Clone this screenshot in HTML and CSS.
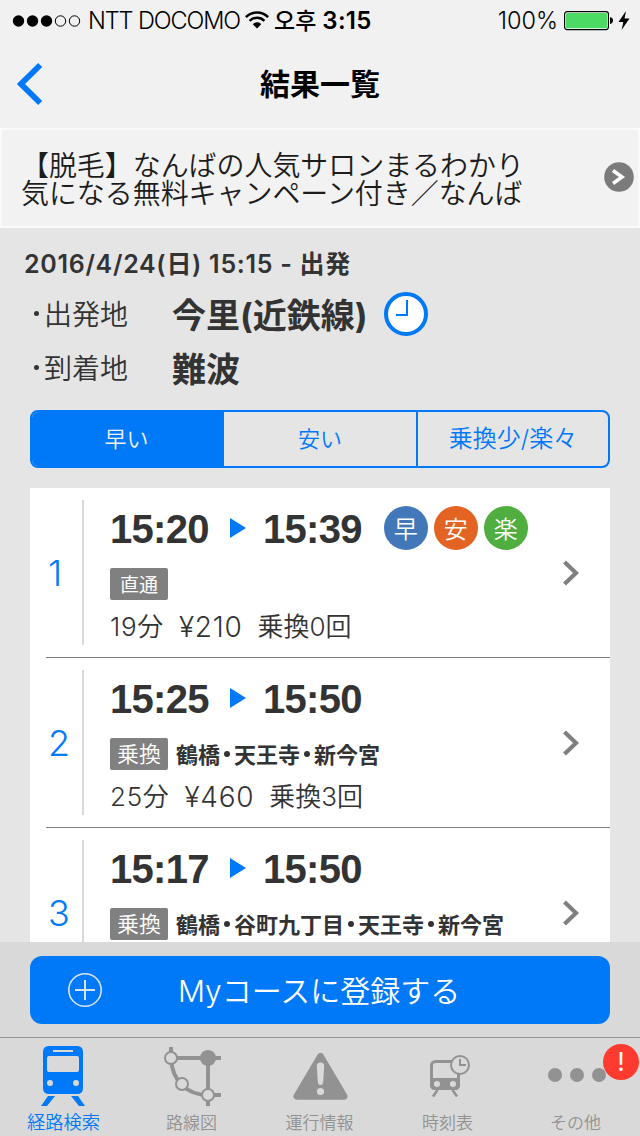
FILE: index.html
```html
<!DOCTYPE html>
<html lang="ja">
<head>
<meta charset="utf-8">
<title>結果一覧</title>
<link rel="stylesheet" href="styles.css">
</head>
<body>
<div class="screen">
  <header class="status">
    <svg class="signal" width="68" height="12" viewBox="0 0 68 12"><g fill="#000"><circle cx="6.500" cy="6" r="5.700"/><circle cx="20.500" cy="6" r="5.700"/><circle cx="34.500" cy="6" r="5.700"/></g><g fill="none" stroke="#000"><circle cx="48.500" cy="6" r="5.200"/><circle cx="62.500" cy="6" r="5.200"/></g></svg>
    <span class="carrier">NTT DOCOMO</span>
    <svg class="wifi" width="24" height="18" viewBox="0 0 24 18"><g fill="none" stroke="#000" stroke-width="2.500"><path d="M.9 6.200C7-.1 17-.1 23.100 6.200"/><path d="M4.600 9.900C8.700 5.800 15.300 5.800 19.400 9.900"/></g><path d="M7.800 13.200C10 10.700 14 10.700 16.200 13.200L12 17.500Z"/></svg>
    <span class="ampm" lang="ko">오후</span>
    <span class="clock">3:15</span>
    <span class="percent">100%</span>
    <svg class="battery" width="50" height="20" viewBox="0 0 50 20"><rect x=".6" y=".6" width="43.800" height="18" rx="2.500" fill="#fff" stroke="#000" stroke-width="1.200"/><rect x="2" y="2" width="41" height="15.200" rx="1" fill="#4cd964"/><path d="M46 6.300Q49 6.700 49 9.600Q49 12.500 46 12.900Z"/></svg>
    <svg class="bolt" width="12" height="20" viewBox="0 0 12 20"><path d="M8 0L.5 11H5.300L3.600 19L11.500 7.500H6.500Z"/></svg>
  </header>
  <nav class="nav">
    <svg class="back" width="26" height="42" viewBox="0 0 26 42"><path d="M23.200 2L4 21L23.200 40" fill="none" stroke="#0079f9" stroke-width="5.800"/></svg>
    <h1 class="title">結果一覧</h1>
  </nav>
  <section class="ad">
    <p class="ad-text">【脱毛】なんばの人気サロンまるわかり<br>気になる無料キャンペーン付き／なんば</p>
    <svg class="ad-go" width="30" height="30" viewBox="0 0 30 30"><circle cx="15" cy="15" r="14.800" fill="#7b7b7b"/><path d="M9 8.500L18 15L9 21.500" fill="none" stroke="#fff" stroke-width="3.600"/></svg>
  </section>
  <main class="main">
    <p class="date">2016/4/24(日) 15:15 - 出発</p>
    <div class="place"><span class="place-label"><i class="dot"></i>出発地</span><strong class="place-name">今里(近鉄線)</strong>
      <svg class="dial" width="44" height="44" viewBox="0 0 44 44"><circle cx="22" cy="22" r="20" fill="#fff" stroke="#0079f9" stroke-width="4"/><path d="M23 8V23H12" fill="none" stroke="#0079f9" stroke-width="2"/></svg>
    </div>
    <div class="place"><span class="place-label"><i class="dot"></i>到着地</span><strong class="place-name">難波</strong></div>
    <div class="segments"><span class="segment selected">早い</span><span class="segment">安い</span><span class="segment last">乗換少/楽々</span></div>
    <div class="results">
      <article class="result">
        <span class="rank">1</span>
        <div class="route">
          <div class="times"><span>15:20</span><svg class="arrow" width="16" height="20" viewBox="0 0 16 20"><path d="M0 0L16 10L0 20Z" fill="#0079f9"/></svg><span>15:39</span><span class="medals"><b class="medal fast">早</b><b class="medal cheap">安</b><b class="medal easy">楽</b></span></div>
          <div class="via"><span class="tag small">直通</span></div>
          <div class="detail"><span class="duration">19分</span><span class="fare">¥210</span><span>乗換0回</span></div>
        </div>
        <svg class="chevron" width="18" height="26" viewBox="0 0 18 26"><path d="M2.500 2L14 13L2.500 24" fill="none" stroke="#808080" stroke-width="4.200"/></svg>
      </article>
      <article class="result">
        <span class="rank">2</span>
        <div class="route">
          <div class="times"><span>15:25</span><svg class="arrow" width="16" height="20" viewBox="0 0 16 20"><path d="M0 0L16 10L0 20Z" fill="#0079f9"/></svg><span>15:50</span></div>
          <div class="via"><span class="tag">乗換</span><span class="stations">鶴橋<i class="sep"></i>天王寺<i class="sep"></i>新今宮</span></div>
          <div class="detail"><span class="duration">25分</span><span class="fare">¥460</span><span>乗換3回</span></div>
        </div>
        <svg class="chevron" width="18" height="26" viewBox="0 0 18 26"><path d="M2.500 2L14 13L2.500 24" fill="none" stroke="#808080" stroke-width="4.200"/></svg>
      </article>
      <article class="result">
        <span class="rank">3</span>
        <div class="route">
          <div class="times"><span>15:17</span><svg class="arrow" width="16" height="20" viewBox="0 0 16 20"><path d="M0 0L16 10L0 20Z" fill="#0079f9"/></svg><span>15:50</span></div>
          <div class="via"><span class="tag">乗換</span><span class="stations">鶴橋<i class="sep"></i>谷町九丁目<i class="sep"></i>天王寺<i class="sep"></i>新今宮</span></div>
        </div>
        <svg class="chevron" width="18" height="26" viewBox="0 0 18 26"><path d="M2.500 2L14 13L2.500 24" fill="none" stroke="#808080" stroke-width="4.200"/></svg>
      </article>
    </div>
  </main>
  <div class="register">
    <div class="register-button">
      <svg class="plus" width="34" height="34" viewBox="0 0 34 34" fill="none" stroke="#d9e3ee"><circle cx="17" cy="17" r="16.200" stroke-width="1.600"/><path d="M17 7V27M7 17H27" stroke-width="2"/></svg>
      <span class="register-text">Myコースに登録する</span>
    </div>
  </div>
  <footer class="tabs">
    <div class="tab active">
      <svg class="tab-icon" width="128" height="66" viewBox="0 0 128 66"><path fill="#0079f9" fill-rule="evenodd" d="M49 8H77Q83 8 83 14V50Q83 56 77 56H49Q43 56 43 50V14Q43 8 49 8ZM53 12V14H73V12ZM49 18Q47 18 47 20V32Q47 34 49 34H77Q79 34 79 32V20Q79 18 77 18ZM50 42A3 3 0 1 0 50 48A3 3 0 1 0 50 42ZM76 42A3 3 0 1 0 76 48A3 3 0 1 0 76 42ZM48 58H55L47 68H41ZM71 58H78L85 68H79Z"/></svg>
      <span class="tab-label">経路検索</span>
    </div>
    <div class="tab">
      <svg class="tab-icon" width="128" height="66" viewBox="0 0 128 66"><g fill="none" stroke="#929292" stroke-width="4"><path d="M43 9V20H93M80 20V68M80 57H93"/><path d="M43 20C44 43 59 57 80 57"/></g><circle cx="80" cy="20" r="8" fill="#929292"/><g fill="#d9d9d9" stroke="#929292" stroke-width="2"><circle cx="43" cy="20" r="6"/><circle cx="54" cy="46" r="6"/><circle cx="80" cy="57" r="6"/></g></svg>
      <span class="tab-label">路線図</span>
    </div>
    <div class="tab">
      <svg class="tab-icon" width="128" height="66" viewBox="0 0 128 66"><path d="M64.500 18.500L41 58.200H88Z" fill="#929292" stroke="#929292" stroke-width="7" stroke-linejoin="round"/><path d="M60.800 28Q60.800 24.500 64.500 24.500Q68.200 24.500 68.200 28L67.200 44Q67 47 64.500 47Q62 47 61.800 44Z" fill="#d9d9d9"/><circle cx="64.500" cy="53.500" r="3.600" fill="#d9d9d9"/></svg>
      <span class="tab-label">運行情報</span>
    </div>
    <div class="tab">
      <svg class="tab-icon" width="128" height="66" viewBox="0 0 128 66"><rect x="47.500" y="23.500" width="27" height="27" rx="4" fill="none" stroke="#929292" stroke-width="3"/><path d="M46 40H76V47Q76 52 71 52H51Q46 52 46 47Z" fill="#929292"/><circle cx="53" cy="46" r="3" fill="#d9d9d9"/><circle cx="69" cy="46" r="3" fill="#d9d9d9"/><path d="M53.500 52L49 58.500M68.500 52L73 58.500" stroke="#929292" stroke-width="2.500"/><circle cx="76" cy="27" r="9" fill="#d9d9d9" stroke="#929292" stroke-width="2"/><path d="M76 21V27H82" fill="none" stroke="#929292" stroke-width="2"/></svg>
      <span class="tab-label">時刻表</span>
    </div>
    <div class="tab">
      <svg class="tab-icon" width="128" height="66" viewBox="0 0 128 66"><g fill="#929292"><circle cx="43" cy="37" r="7"/><circle cx="65" cy="37" r="7"/><circle cx="87" cy="37" r="7"/></g></svg>
      <span class="badge">!</span>
      <span class="tab-label">その他</span>
    </div>
  </footer>
</div>
</body>
</html>
```
FILE: styles.css
```css
* { box-sizing: border-box; }
body { margin: 0; }
.screen {
  display: flex; flex-direction: column;
  width: 640px; height: 1136px; overflow: hidden;
  background: #e5e5e5; color: #333;
  font-family: Inter, "Noto Sans CJK JP", sans-serif;
  white-space: nowrap;
}
p, h1 { margin: 0; }
svg { display: block; flex: none; overflow: visible; }

.status { display: flex; align-items: center; flex: none; height: 40px; padding: 1px 10px 0 12px; background: #f1f1f1; color: #000; font-size: 24px; }
.carrier { width: 157px; margin-left: 8px; font-size: 23.500px; letter-spacing: -1.100px; font-weight: 350; }
.wifi { margin-top: -2px; }
.ampm { margin: -4px 0 0 5px; font: 500 23px/30px "Noto Sans CJK KR", sans-serif; }
.clock { margin-left: 6px; font-size: 24px; font-weight: 600; letter-spacing: .3px; }
.percent { margin-left: auto; font-size: 23.500px; font-weight: 350; }
.battery { margin-left: 6px; }
.bolt { margin-left: 4px; }

.nav { display: flex; align-items: center; flex: none; height: 88px; padding: 0 17px; background: #f1f1f1; color: #000; }
.back { width: 26px; }
.title { flex: 1; margin-top: -4px; padding-right: 26px; text-align: center; font: 600 30px/40px "Noto Sans CJK JP", sans-serif; }

.ad { display: flex; align-items: center; justify-content: space-between; flex: none; height: 100px; padding: 0 6px 0 19px; border: 2px solid #fafafa; background: #f2f2f2; }
.ad-text { font: 350 27.950px/28px "Noto Sans CJK JP", sans-serif; color: #1c1c1c; }
.ad-go { margin: -2px -2px 0 0; }

.main { flex: 1; min-height: 0; padding: 16px 30px 0; overflow: hidden; }
.date { margin-left: -6px; height: 42px; font-size: 25px; line-height: 40px; font-weight: 600; letter-spacing: .7px; }
.place { display: flex; align-items: center; height: 54px; }
.place-label { display: flex; align-items: center; width: 142px; font-size: 28px; font-weight: 350; }
.dot { width: 5px; height: 5px; margin: 0 5px 0 4px; border-radius: 50%; background: #333; }
.place-name { font-size: 34px; font-weight: 700; }
.dial { margin: 2px 0 0 16px; }

.segments { display: flex; height: 58px; margin-top: 16px; border: 2px solid #0079f9; border-radius: 8px; overflow: hidden; color: #0079f9; font-size: 22px; font-weight: 350; line-height: 54px; text-align: center; }
.segment { width: 192px; }
.segment.selected { padding-right: 3px; background: #0079f9; color: #f0f0f0; }
.segment.last { border-left: 2px solid #0079f9; font-size: 24px; }

.results { margin-top: 20px; padding-left: 16px; background: #fff; }
.result { display: flex; align-items: center; height: 170px; padding: 12px 30px 12px 0; border-bottom: 1px solid #808080; }
.rank { width: 36px; padding-left: 2px; font-size: 36px; font-weight: 350; color: #0079f9; }
.route { flex: 1; height: 145px; padding-left: 26px; border-left: 2px solid #d9d9d9; }
.times { display: flex; align-items: center; height: 56px; font-family: "Liberation Sans", sans-serif; font-size: 40px; font-weight: 700; line-height: 58px; letter-spacing: -.7px; }
.times > span:first-child { width: 120px; }
.times > span:not(.medals) { padding-top: 2px; }
.arrow { margin-right: 17px; }
.medals { display: flex; gap: 6px; margin-left: 22px; letter-spacing: 0; }
.medal { width: 44px; height: 44px; border-radius: 50%; color: #fff; font: 350 24px/43px "Noto Sans CJK JP", sans-serif; text-align: center; }
.fast { background: #4278b8; }
.cheap { background: #e36422; }
.easy { background: #4fae3f; }
.via { display: flex; align-items: center; height: 32px; margin-top: 12px; }
.tag { width: 58px; height: 32px; border-radius: 2px; background: #808080; color: #fff; font: 350 22px/29px "Noto Sans CJK JP", sans-serif; text-align: center; }
.tag.small { font-size: 19px; font-weight: 400; line-height: 31px; }
.stations { display: flex; align-items: center; margin: -2px 0 0 8px; font: 700 22px/32px "Noto Sans CJK JP", sans-serif; }
.sep { width: 6px; height: 6px; margin: 2px 4px 0; border-radius: 50%; background: #333; }
.detail { display: flex; gap: 15px; margin-top: 9px; font-size: 26px; font-weight: 350; line-height: 36px; }
.duration { letter-spacing: .7px; }
.fare { font-size: 28px; letter-spacing: .7px; }
.chevron { width: 18px; margin-top: 1px; }

.register { flex: none; height: 95px; padding: 14px 30px 0; background: #d9d9d9; }
.register-button { display: flex; align-items: center; height: 68px; padding-left: 38px; border-radius: 12px; background: #0079f9; color: #fff; }
.register-text { margin: -3px 0 0 76px; font-size: 30px; font-weight: 350; }

.tabs { display: flex; flex: none; height: 99px; border-top: 1px solid #929292; background: #d9d9d9; color: #929292; }
.tab { position: relative; flex: 1; }
.tab-icon { width: 128px; height: 66px; }
.tab-label { display: block; padding-right: 1px; font: 350 17px/35px "Noto Sans CJK JP", sans-serif; text-align: center; }
.tab.active .tab-label { color: #0079f9; font-size: 18.300px; line-height: 34px; }
.badge { position: absolute; top: 6px; right: 1px; width: 36px; height: 36px; border-radius: 50%; background: #ff3b30; color: #fff; font-size: 26px; line-height: 35px; text-align: center; }
```
